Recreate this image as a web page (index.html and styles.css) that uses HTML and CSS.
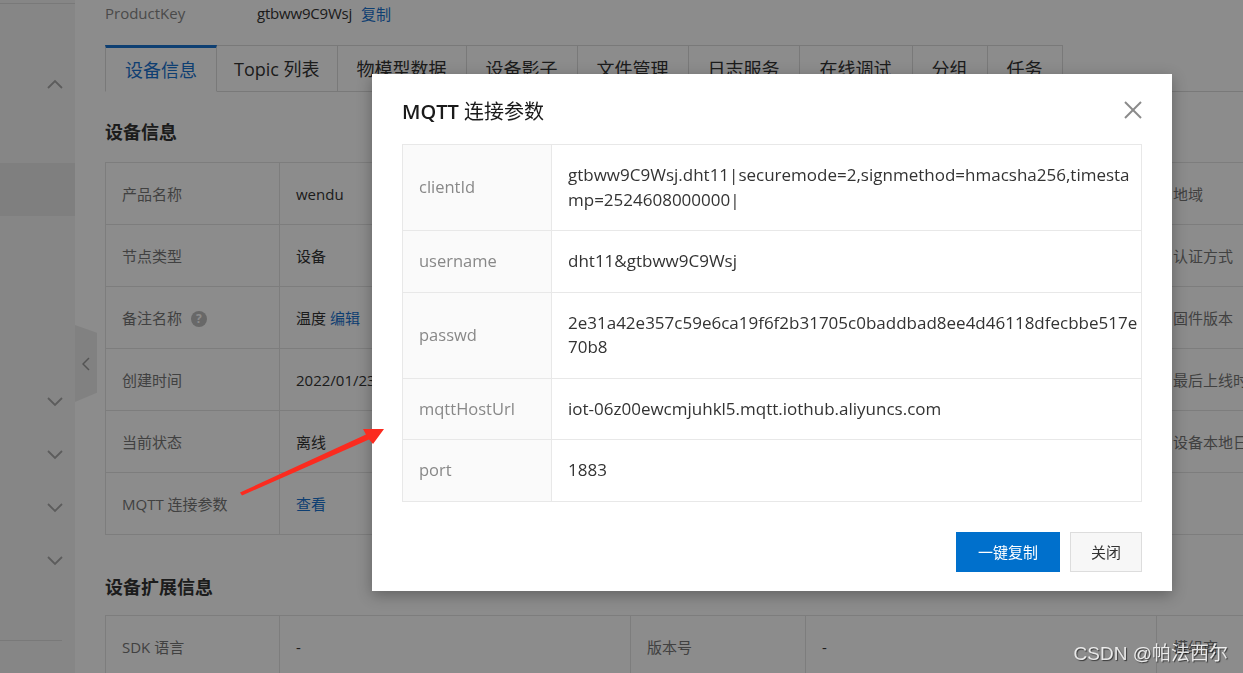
FILE: index.html
```html
<!DOCTYPE html>
<html lang="zh-CN">
<head>
    <meta charset="UTF-8">
    <title>设备详情 - MQTT 连接参数</title>
    <link rel="stylesheet" href="styles.css">
</head>
<body>
    <div class="app">
        <aside class="sidebar">
            <div class="side-head"></div>
            <div class="side-item"></div>
            <div class="side-item">
                <svg class="chev" width="16" height="10" viewBox="0 0 16 10"><polyline points="1,9 8,2 15,9"/></svg>
            </div>
            <div class="side-item"></div>
            <div class="side-item selected"></div>
            <div class="side-item"></div>
            <div class="side-item"></div>
            <div class="side-item"></div>
            <div class="side-item">
                <svg class="chev" width="16" height="10" viewBox="0 0 16 10"><polyline points="1,1 8,8 15,1"/></svg>
            </div>
            <div class="side-item">
                <svg class="chev" width="16" height="10" viewBox="0 0 16 10"><polyline points="1,1 8,8 15,1"/></svg>
            </div>
            <div class="side-item">
                <svg class="chev" width="16" height="10" viewBox="0 0 16 10"><polyline points="1,1 8,8 15,1"/></svg>
            </div>
            <div class="side-item">
                <svg class="chev" width="16" height="10" viewBox="0 0 16 10"><polyline points="1,1 8,8 15,1"/></svg>
            </div>
            <div class="side-item last"></div>
        </aside>

        <main class="main">
            <div class="collapse-handle">
                <svg width="8" height="14" viewBox="0 0 8 14"><polyline points="7,1 1,7 7,13"/></svg>
            </div>

            <div class="key-row">
                <span class="key-label">ProductKey</span>
                <span class="key-value">gtbww9C9Wsj</span>
                <a class="link">复制</a>
            </div>

            <div class="tabs">
                <div class="tab active">设备信息</div>
                <div class="tab">Topic 列表</div>
                <div class="tab">物模型数据</div>
                <div class="tab">设备影子</div>
                <div class="tab">文件管理</div>
                <div class="tab">日志服务</div>
                <div class="tab">在线调试</div>
                <div class="tab">分组</div>
                <div class="tab">任务</div>
                <div class="tab-rest"></div>
            </div>

            <h3 class="section-title">设备信息</h3>
            <table class="info-table">
                <colgroup>
                    <col class="c-label"><col class="c-value"><col class="c-label2"><col class="c-value"><col class="c-label2"><col class="c-value">
                </colgroup>
                <tr>
                    <td class="lbl">产品名称</td><td>wendu</td>
                    <td class="lbl"></td><td></td>
                    <td class="lbl">地域</td><td>华东2（上海）</td>
                </tr>
                <tr>
                    <td class="lbl">节点类型</td><td>设备</td>
                    <td class="lbl"></td><td></td>
                    <td class="lbl">认证方式</td><td>设备密钥</td>
                </tr>
                <tr>
                    <td class="lbl">备注名称 <span class="help">?</span></td><td>温度 <a class="link">编辑</a></td>
                    <td class="lbl"></td><td></td>
                    <td class="lbl">固件版本</td><td>-</td>
                </tr>
                <tr>
                    <td class="lbl">创建时间</td><td>2022/01/23 15:32:08</td>
                    <td class="lbl"></td><td></td>
                    <td class="lbl">最后上线时间</td><td>-</td>
                </tr>
                <tr>
                    <td class="lbl">当前状态</td><td>离线</td>
                    <td class="lbl"></td><td></td>
                    <td class="lbl">设备本地日志上报</td><td>已关闭</td>
                </tr>
                <tr>
                    <td class="lbl">MQTT 连接参数</td><td><a class="link">查看</a></td>
                    <td class="lbl"></td><td></td>
                    <td class="lbl"></td><td></td>
                </tr>
            </table>

            <h3 class="section-title ext">设备扩展信息</h3>
            <table class="info-table">
                <colgroup>
                    <col class="c-label"><col class="c-value"><col class="c-label2"><col class="c-value"><col class="c-label2"><col class="c-value">
                </colgroup>
                <tr>
                    <td class="lbl">SDK 语言</td><td>-</td>
                    <td class="lbl">版本号</td><td>-</td>
                    <td class="lbl">模组商</td><td>-</td>
                </tr>
            </table>
        </main>
    </div>

    <div class="mask"></div>

    <div class="dialog">
        <div class="dialog-head">
            <h2 class="dialog-title"><span class="latin">MQTT</span> 连接参数</h2>
            <svg class="close" width="18" height="18" viewBox="0 0 18 18"><line x1="1" y1="1" x2="17" y2="17"/><line x1="17" y1="1" x2="1" y2="17"/></svg>
        </div>
        <table class="param-table">
            <tr>
                <td class="p-label">clientId</td>
                <td class="p-value">gtbww9C9Wsj.dht11|securemode=2,signmethod=hmacsha256,timestamp=2524608000000|</td>
            </tr>
            <tr>
                <td class="p-label">username</td>
                <td class="p-value">dht11&amp;gtbww9C9Wsj</td>
            </tr>
            <tr>
                <td class="p-label">passwd</td>
                <td class="p-value">2e31a42e357c59e6ca19f6f2b31705c0baddbad8ee4d46118dfecbbe517e70b8</td>
            </tr>
            <tr>
                <td class="p-label">mqttHostUrl</td>
                <td class="p-value">iot-06z00ewcmjuhkl5.mqtt.iothub.aliyuncs.com</td>
            </tr>
            <tr>
                <td class="p-label">port</td>
                <td class="p-value">1883</td>
            </tr>
        </table>
        <div class="dialog-foot">
            <button class="btn btn-primary">一键复制</button>
            <button class="btn btn-default">关闭</button>
        </div>
    </div>

    <svg class="arrow" width="1243" height="673" viewBox="0 0 1243 673">
        <polygon points="240,492.5 366,434.5 363,429 384,429 373,444 369,439.5 242,495.5"/>
    </svg>

    <div class="watermark">CSDN @帕法西尔</div>
</body>
</html>
```

FILE: styles.css
```css
body {
    margin: 0;
    font-family: "Open Sans", "Noto Sans CJK SC", sans-serif;
    color: #333;
    background: #fff;
    overflow: hidden;
    height: 673px;
}
.app {
    display: flex;
    height: 673px;
}
.sidebar {
    width: 75px;
    flex-shrink: 0;
    background: #f5f5f5;
}
.side-head {
    height: 3px;
    border-bottom: 1px solid #ddd;
}
.side-item {
    height: 53px;
    display: flex;
    align-items: center;
    justify-content: flex-end;
    padding-right: 12px;
}
.side-item.selected {
    background: #e8e8e8;
}
.side-item.last {
    margin-right: 13px;
    border-bottom: 1px solid #ddd;
}
.chev polyline {
    fill: none;
    stroke: #a8a8a8;
    stroke-width: 1.8;
}
.main {
    flex: 1;
    position: relative;
    padding-left: 30px;
    overflow: hidden;
}
.collapse-handle {
    position: absolute;
    left: 0;
    top: 325px;
    width: 22px;
    height: 77px;
    background: #ececec;
    clip-path: polygon(0 0, 100% 10%, 100% 88%, 0 100%);
    display: flex;
    align-items: center;
    justify-content: center;
}
.collapse-handle polyline {
    fill: none;
    stroke: #999;
    stroke-width: 1.5;
}
.key-row {
    height: 26px;
    display: flex;
    align-items: center;
    font-size: 15px;
}
.key-label {
    width: 152px;
    color: #888;
}
.key-value {
    margin-right: 9px;
    letter-spacing: -0.2px;
}
.link {
    color: #1a73cf;
    cursor: pointer;
}
.tabs {
    display: flex;
    margin-top: 19px;
    height: 47px;
}
.tab {
    padding: 0 19px;
    font-size: 18px;
    line-height: 47px;
    border-top: 1px solid #ddd;
    border-right: 1px solid #ddd;
    border-bottom: 1px solid #ddd;
    white-space: nowrap;
}
.tab:nth-child(2) {
    padding: 0 17px;
}
.tab:nth-child(7) {
    padding: 0 20px;
}
.tab.active {
    color: #1a73cf;
    border-top: 3px solid #1a73cf;
    border-left: 1px solid #ddd;
    border-bottom-color: transparent;
    line-height: 45px;
}
.tab-rest {
    flex: 1;
    border-bottom: 1px solid #ddd;
}
.section-title {
    margin: 27px 0 17px;
    font-size: 18px;
    line-height: 26px;
    font-weight: bold;
    color: #333;
}
.section-title.ext {
    margin-top: 39px;
    margin-bottom: 15px;
}
.info-table {
    border-collapse: collapse;
    table-layout: fixed;
    width: 1575px;
    font-size: 15px;
}
.c-label { width: 174px; }
.c-label2 { width: 175px; }
.c-value { width: 351px; }
.info-table td {
    border: 1px solid #e3e3e3;
    height: 61px;
    padding: 0 16px;
    white-space: nowrap;
    overflow: hidden;
}
.info-table .lbl {
    color: #777;
}
.help {
    display: inline-block;
    width: 16px;
    height: 16px;
    line-height: 16px;
    border-radius: 50%;
    background: #bdbdbd;
    color: #fff;
    font-size: 12px;
    font-weight: bold;
    text-align: center;
    vertical-align: 1px;
    margin-left: 5px;
}
.mask {
    position: fixed;
    top: 0;
    left: 0;
    right: 0;
    bottom: 0;
    background: rgba(0, 0, 0, 0.45);
}
.dialog {
    position: absolute;
    left: 372px;
    top: 74px;
    width: 800px;
    box-sizing: border-box;
    padding: 22px 30px 19px;
    background: #fff;
    box-shadow: 0 4px 14px rgba(0, 0, 0, 0.3);
}
.dialog-head {
    display: flex;
    justify-content: space-between;
    align-items: center;
    height: 28px;
}
.dialog-title {
    margin: 0;
    font-size: 20px;
    font-weight: normal;
    color: #1a1a1a;
}
.dialog-title .latin {
    font-weight: 600;
}
.close line {
    stroke: #8a8a8a;
    stroke-width: 2;
}
.param-table {
    margin-top: 20px;
    width: 100%;
    border-collapse: collapse;
    table-layout: fixed;
    font-size: 17px;
}
.param-table td {
    border: 1px solid #e8e8e8;
    padding: 18px 16px;
    line-height: 24.5px;
}
.p-label {
    width: 116px;
    background: #fafafa;
    color: #888;
    font-size: 16.5px;
}
.p-value {
    word-break: break-all;
    color: #333;
    padding-right: 2px !important;
}
.dialog-foot {
    display: flex;
    justify-content: flex-end;
    gap: 10px;
    margin-top: 30px;
}
.btn {
    height: 40px;
    font-family: "Noto Sans CJK SC", sans-serif;
    font-size: 15px;
    cursor: pointer;
}
.btn-primary {
    padding: 0 22px;
    border: none;
    background: #0070cc;
    color: #fff;
}
.btn-default {
    padding: 0 20px;
    border: 1px solid #ddd;
    background: #f7f7f7;
    color: #333;
}
.arrow {
    position: absolute;
    top: 0;
    left: 0;
    pointer-events: none;
}
.arrow polygon {
    fill: #fb2b1f;
}
.watermark {
    position: absolute;
    right: 15px;
    bottom: 8px;
    font-family: "Liberation Sans", "Noto Sans CJK SC", sans-serif;
    font-size: 19px;
    color: rgba(255, 255, 255, 0.85);
    text-shadow: 1px 1px 1px rgba(0, 0, 0, 0.6);
}
```
